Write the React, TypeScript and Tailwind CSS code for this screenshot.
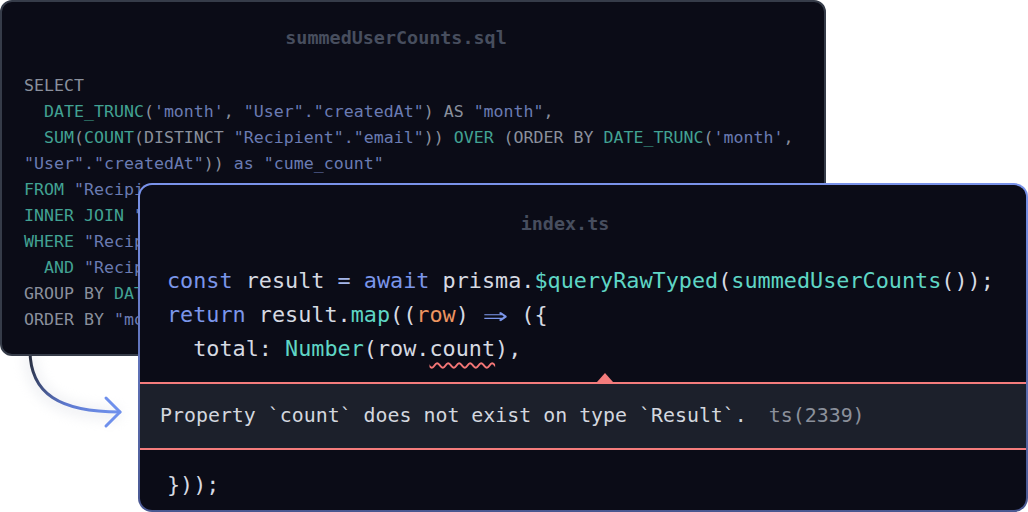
import type { ReactNode } from "react";

type Tok = [string, string];

// colours for the dimmed sql panel
const kw = "text-[#8a909d]";
const fn = "text-[#42a293]";
const str = "text-[#6a7bb2]";

// colours for the front ts panel
const blue = "text-[#7b96ea]";
const light = "text-[#d6dae2]";
const op = "text-[#a5b6ea]";
const teal = "text-[#5fd6c5]";
const orange = "text-[#ee9460]";

const sqlLines: Tok[][] = [
  [["SELECT", kw]],
  [
    ["  ", kw],
    ["DATE_TRUNC", fn],
    ["(", kw],
    ["'month'", str],
    [", ", kw],
    ['"User"', str],
    [".", str],
    ['"createdAt"', str],
    [") AS ", kw],
    ['"month"', str],
    [",", kw],
  ],
  [
    ["  ", kw],
    ["SUM", fn],
    ["(", kw],
    ["COUNT", fn],
    ["(DISTINCT ", kw],
    ['"Recipient"', str],
    [".", str],
    ['"email"', str],
    [")) ", kw],
    ["OVER", fn],
    [" (ORDER BY ", kw],
    ["DATE_TRUNC", fn],
    ["(", kw],
    ["'month'", str],
    [",", kw],
  ],
  [
    ['"User"', str],
    [".", str],
    ['"createdAt"', str],
    [")) ", kw],
    ["as ", str],
    ['"cume_count"', str],
  ],
  [
    ["FROM ", fn],
    ['"Recipient"', str],
  ],
  [
    ["INNER JOIN ", fn],
    ['"User" ', str],
    ["ON ", fn],
    ['"User"."id" = "Recipient"."userId"', str],
  ],
  [
    ["WHERE ", fn],
    ['"Recipient"."email" IS NOT NULL', str],
  ],
  [
    ["  AND ", fn],
    ['"Recipient"."createdAt" > NOW()', str],
  ],
  [
    ["GROUP BY ", kw],
    ["DATE_TRUNC", fn],
    ["(", kw],
    ["'month'", str],
    [', "User"."createdAt")', str],
  ],
  [
    ["ORDER BY ", kw],
    ['"month"', str],
  ],
];

function Line({ toks }: { toks: Tok[] }) {
  return (
    <div className="whitespace-pre">
      {toks.map(([t, c], i) => (
        <span key={i} className={c}>
          {t}
        </span>
      ))}
    </div>
  );
}

function CodeRow({ children }: { children: ReactNode }) {
  return <div className="whitespace-pre">{children}</div>;
}

function Arrow() {
  return (
    <svg
      className="absolute left-0 top-[340px]"
      width="140"
      height="100"
      viewBox="0 0 140 100"
      fill="none"
    >
      <defs>
        <linearGradient id="arrowGrad" gradientUnits="userSpaceOnUse" x1="30" y1="12" x2="120" y2="72">
          <stop offset="0" stopColor="#262b38" />
          <stop offset="0.55" stopColor="#5d78cf" />
          <stop offset="1" stopColor="#7193ee" />
        </linearGradient>
        <filter id="soft" x="-50%" y="-50%" width="200%" height="200%">
          <feGaussianBlur stdDeviation="6" />
        </filter>
      </defs>
      <path
        d="M30 14 C30 56 62 74 120 74"
        stroke="#d9dce3"
        strokeWidth="14"
        opacity="0.35"
        filter="url(#soft)"
      />
      <path d="M30 10 C30 54 60 72 120 72" stroke="url(#arrowGrad)" strokeWidth="3" strokeLinecap="round" />
      <path
        d="M106 58 L120 72 L106 86"
        stroke="#6f90ec"
        strokeWidth="3"
        strokeLinecap="round"
        strokeLinejoin="round"
      />
    </svg>
  );
}

export default function App() {
  return (
    <div
      className="relative h-[512px] w-[1028px] overflow-hidden bg-white"
      style={{ fontFamily: '"DejaVu Sans Mono", "Liberation Mono", monospace' }}
    >
      <Arrow />

      {/* sql file, sitting behind */}
      <div className="relative h-[356px] w-[826px] overflow-hidden rounded-[12px] border-2 border-[#363c49] bg-[#0b0c17]">
        <div className="flex justify-center pr-[34px] pt-[24px] text-[18.4px] font-bold leading-[24px] text-[#474e5e]">
          summedUserCounts.sql
        </div>
        <div className="mt-[23px] pl-[22px] text-[16.6px] leading-[26px]">
          {sqlLines.map((l, i) => (
            <Line key={i} toks={l} />
          ))}
        </div>
      </div>

      {/* ts file, in front */}
      <div className="absolute left-[138px] top-[183px] h-[329px] w-[890px] rounded-[14px] bg-gradient-to-b from-[#7a93ea] to-[#4a5891] p-[2px]">
        <div className="flex h-full flex-col overflow-hidden rounded-[12px] bg-[#0b0c17]">
          <div className="flex justify-center pr-[36px] pt-[27px] text-[18.4px] font-bold leading-[24px] text-[#474e5e]">
            index.ts
          </div>
          <div className="mt-[28px] px-[27px] text-[21.8px] leading-[34px]">
            <CodeRow>
              <span className={blue}>const</span>
              <span className={light}> result </span>
              <span className={op}>=</span>
              <span className={light}> </span>
              <span className={blue}>await</span>
              <span className={light}> prisma.</span>
              <span className={teal}>$queryRawTyped</span>
              <span className={light}>(</span>
              <span className={teal}>summedUserCounts</span>
              <span className={light}>());</span>
            </CodeRow>
            <CodeRow>
              <span className={blue}>return</span>
              <span className={light}> result.</span>
              <span className={teal}>map</span>
              <span className={light}>((</span>
              <span className={orange}>row</span>
              <span className={light}>) </span>
              <span className="inline-block w-[2ch] text-center">
                <span className={`${blue} inline-block scale-x-[1.9] scale-y-[1.25]`}>⇒</span>
              </span>
              <span className={light}> ({"{"}</span>
            </CodeRow>
            <CodeRow>
              <span className={light}>  total: </span>
              <span className={teal}>Number</span>
              <span className={light}>(row.</span>
              <span className={`${light} underline decoration-[#f47676] decoration-wavy decoration-[1.5px] underline-offset-[6px]`}>
                count
              </span>
              <span className={light}>),</span>
            </CodeRow>
          </div>

          <div className="relative mt-[16px] border-y-2 border-[#f47c7c] bg-[#1c202b] py-[20px] pl-[20px] text-[19.9px] leading-[24px]">
            <svg className="absolute left-[457px] top-[-12px]" width="16" height="10" viewBox="0 0 16 10">
              <path d="M0 10 L8 1 L16 10 Z" fill="#f47c7c" />
            </svg>
            <span className="whitespace-pre text-[#d3d7df]">Property `count` does not exist on type `Result`.</span>
            <span className="ml-[22px] text-[#8b909b]">ts(2339)</span>
          </div>

          <div className="mt-[18px] px-[27px] text-[21.8px] leading-[34px]">
            <CodeRow>
              <span className={light}>{"}));"}</span>
            </CodeRow>
          </div>
        </div>
      </div>
    </div>
  );
}
